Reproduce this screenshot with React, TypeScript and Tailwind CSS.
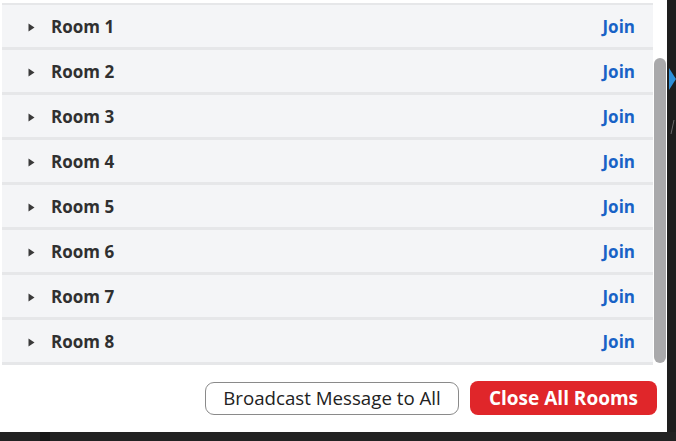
import React from 'react';

const ROOMS = [1, 2, 3, 4, 5, 6, 7, 8];

function Caret() {
  return (
    <svg width="7" height="9" viewBox="0 0 7 9" className="shrink-0">
      <path d="M0.5 0.5 L6.5 4.5 L0.5 8.5 Z" fill="#3a3a3a" />
    </svg>
  );
}

function RoomRow({ n, first }: { n: number; first: boolean }) {
  return (
    <div
      className={`flex h-[45px] items-center border-b-[3px] border-[#e6e7e9] bg-[#f4f5f7] pt-[2px] pl-[26px] pr-[18px] ${
        first ? 'border-t-2 h-[47px]' : ''
      }`}
    >
      <Caret />
      <span className="ml-[16px] text-[17px] font-bold text-[#303030]">Room {n}</span>
      <span className="ml-auto text-[17px] font-bold text-[#1862c6]">Join</span>
    </div>
  );
}

export default function App() {
  return (
    <div
      className="flex h-[441px] w-[676px] flex-col overflow-hidden bg-[#1e1e1e]"
      style={{ fontFamily: '"Open Sans", "Noto Sans", sans-serif' }}
    >
      <div className="flex h-[432px]">
        <div className="flex w-[667px] flex-col bg-white">
          <div className="flex pt-[3px]">
            <div className="ml-[2px] w-[651px]">
              {ROOMS.map((n, i) => (
                <RoomRow key={n} n={n} first={i === 0} />
              ))}
            </div>
            <div className="ml-[1px] w-[12px] pt-[55px]">
              <div className="h-[305px] w-[12px] rounded-full bg-[#a9a9ab]" />
            </div>
          </div>
          <div className="flex flex-1 items-center justify-end gap-[11px] pr-[10px] pb-[1px]">
            <button className="h-[33px] w-[254px] rounded-[9px] border-[1.5px] border-[#8a8a8a] bg-white text-[18.7px] text-[#222]">
              Broadcast Message to All
            </button>
            <button className="h-[34px] w-[187px] rounded-[8px] bg-[#e0262a] text-[19px] font-bold text-white">
              Close All Rooms
            </button>
          </div>
        </div>
        <div className="flex-1 pt-[68px]">
          <svg width="9" height="70" viewBox="0 0 9 70">
            <path d="M2 0 L9 11 L2 22 Z" fill="#2d8fd8" />
            <path d="M7 52 L4 66" stroke="#6a6a6a" strokeWidth="1" />
          </svg>
        </div>
      </div>
      <div className="flex flex-1">
        <div className="w-[40px] bg-[#222]" />
        <div className="w-[10px] bg-[#151515]" />
        <div className="flex-1 bg-[#222]" />
      </div>
    </div>
  );
}
